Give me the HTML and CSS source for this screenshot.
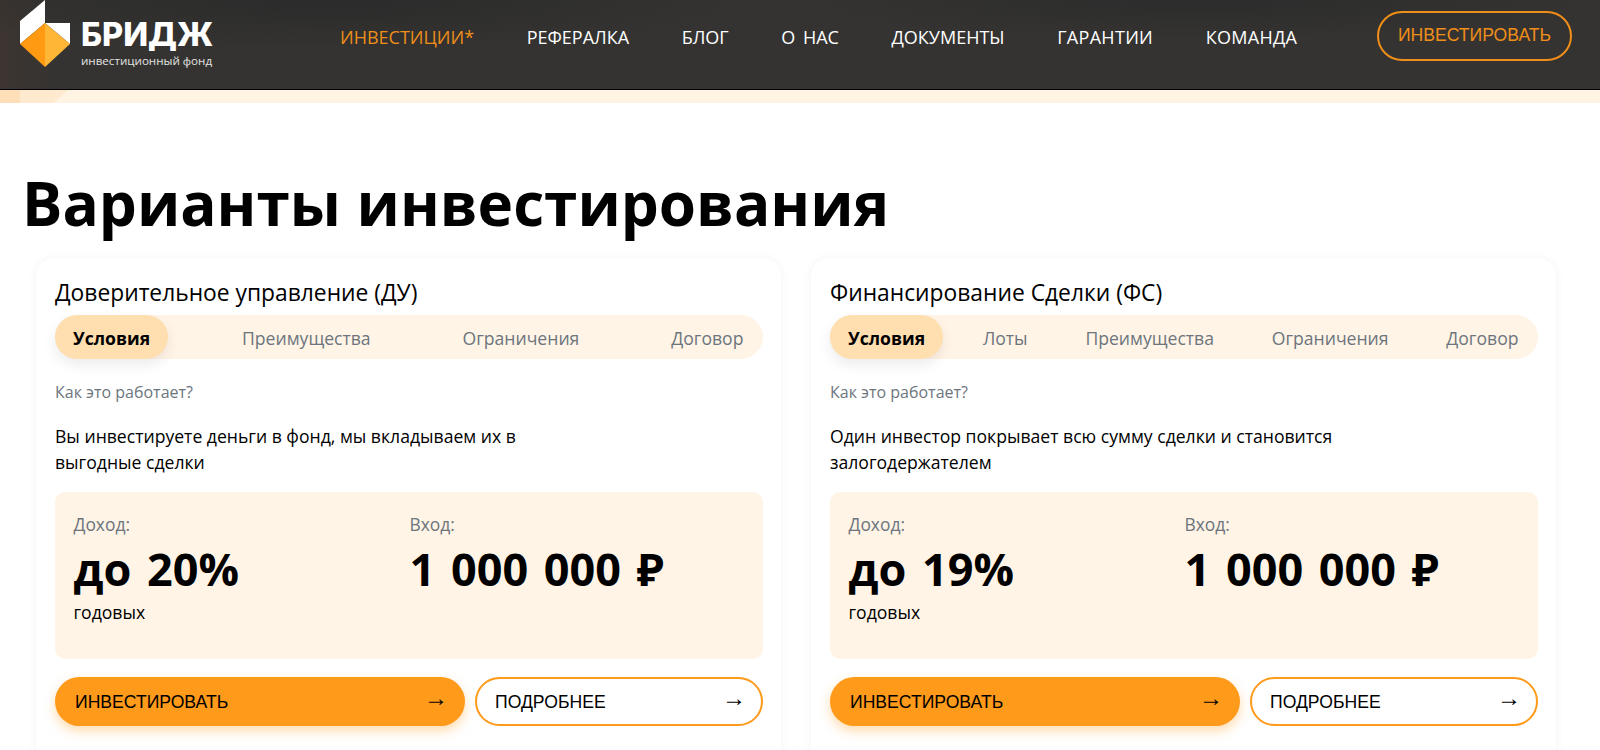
FILE: index.html
```html
<!DOCTYPE html>
<html lang="ru">
<head>
<meta charset="utf-8">
<title>Бридж</title>
<link rel="stylesheet" href="styles.css">
</head>
<body>
<header class="header">
  <a class="logo">
    <svg class="logo-mark" width="52" height="68" viewBox="0 0 52 68">
      <polygon points="0,21 25,0 25,23 0,44" fill="#fff"/>
      <polygon points="25,23 50,23 50,44" fill="#fff"/>
      <polygon points="25,23 0,44 25,67" fill="#ff9a12"/>
      <polygon points="25,23 50,44 25,67" fill="#ffb535"/>
    </svg>
    <span class="logo-text">
      <span class="logo-name">БРИДЖ</span>
      <span class="logo-sub">инвестиционный фонд</span>
    </span>
  </a>
  <nav class="nav">
    <a class="nav-link nav-active">ИНВЕСТИЦИИ*</a>
    <a class="nav-link">РЕФЕРАЛКА</a>
    <a class="nav-link">БЛОГ</a>
    <a class="nav-link">О НАС</a>
    <a class="nav-link">ДОКУМЕНТЫ</a>
    <a class="nav-link nav-wide">ГАРАНТИИ</a>
    <a class="nav-link nav-wide">КОМАНДА</a>
  </nav>
  <a class="header-btn">ИНВЕСТИРОВАТЬ</a>
</header>
<div class="strip"><span class="strip-a"></span><span class="strip-b"></span></div>
<main class="main">
  <h1 class="title">Варианты инвестирования</h1>
  <div class="cards">
    <section class="card">
      <h2 class="card-title">Доверительное управление (ДУ)</h2>
      <div class="tabs">
        <span class="tab tab-active">Условия</span>
        <span class="tab">Преимущества</span>
        <span class="tab">Ограничения</span>
        <span class="tab">Договор</span>
      </div>
      <p class="muted">Как это работает?</p>
      <p class="desc">Вы инвестируете деньги в фонд, мы вкладываем их в<br>выгодные сделки</p>
      <div class="stats">
        <div class="stat">
          <div class="stat-label">Доход:</div>
          <div class="stat-value">до 20%</div>
          <div class="stat-note">годовых</div>
        </div>
        <div class="stat">
          <div class="stat-label">Вход:</div>
          <div class="stat-value">1 000 000 ₽</div>
        </div>
      </div>
      <div class="actions">
        <a class="btn btn-primary">ИНВЕСТИРОВАТЬ<span class="arrow">→</span></a>
        <a class="btn btn-outline">ПОДРОБНЕЕ<span class="arrow">→</span></a>
      </div>
    </section>
    <section class="card">
      <h2 class="card-title">Финансирование Сделки (ФС)</h2>
      <div class="tabs">
        <span class="tab tab-active">Условия</span>
        <span class="tab">Лоты</span>
        <span class="tab">Преимущества</span>
        <span class="tab">Ограничения</span>
        <span class="tab">Договор</span>
      </div>
      <p class="muted">Как это работает?</p>
      <p class="desc">Один инвестор покрывает всю сумму сделки и становится<br>залогодержателем</p>
      <div class="stats">
        <div class="stat">
          <div class="stat-label">Доход:</div>
          <div class="stat-value">до 19%</div>
          <div class="stat-note">годовых</div>
        </div>
        <div class="stat">
          <div class="stat-label">Вход:</div>
          <div class="stat-value">1 000 000 ₽</div>
        </div>
      </div>
      <div class="actions">
        <a class="btn btn-primary">ИНВЕСТИРОВАТЬ<span class="arrow">→</span></a>
        <a class="btn btn-outline">ПОДРОБНЕЕ<span class="arrow">→</span></a>
      </div>
    </section>
  </div>
</main>
</body>
</html>
```
FILE: styles.css
```css
* { box-sizing: border-box; }
html, body { margin: 0; height: 750px; overflow: hidden; background: #fff; }
body { font-family: "Open Sans", "Noto Sans", sans-serif; color: #000; }

.header {
  height: 90px;
  display: flex;
  align-items: flex-start;
  padding-left: 20px;
  background: #343331;
  background-image: radial-gradient(ellipse 420px 50px at 330px 0, #2b2b2b, rgba(43,43,43,0)), radial-gradient(ellipse 400px 40px at 1200px 0, #2c2c2c, rgba(44,44,44,0)), linear-gradient(90deg, #3d3530, #343331 60px);
  border-bottom: 1px solid #000;
}
.logo { display: flex; align-items: flex-start; width: 320px; flex: none; }
.logo-mark { display: block; flex: none; }
.logo-text { display: flex; flex-direction: column; margin-left: 9px; padding-top: 17px; color: #fff; }
.logo-name { font: 800 32.5px/36px "Inter", "Open Sans", sans-serif; }
.logo-sub { font: 400 11.6px/13px "Open Sans", sans-serif; color: #e3e3e3; margin-top: 1px; white-space: nowrap; }

.nav { display: flex; gap: 52.6px; padding-top: 24px; width: 1048px; flex: none; word-spacing: 3px; }
.nav-link { font-size: 18px; line-height: 26px; color: #fff; white-space: nowrap; }
.nav-active { color: #ef8e19; }
.nav-wide { letter-spacing: .3px; }
.header-btn {
  width: 195px; height: 50px; margin-top: 11px; margin-left: -11px;
  display: flex; align-items: center; justify-content: center;
  border: 2px solid #ef8e19; border-radius: 25px;
  font: 400 17.6px/22px "Liberation Sans", Arial, sans-serif; color: #ef8e19;
  padding-bottom: 3px;
}

.strip { height: 13px; background: #fff3e3; display: flex; }
.strip-a { width: 20px; background: #ffdfb8; }
.strip-b { width: 48px; background: #ffe9cf; clip-path: polygon(0 0, 100% 0, 70% 100%, 0 100%); }

.main { padding: 58px 44px 0 36px; }
.title { margin: 0 0 0 -14px; font-size: 60.2px; line-height: 85px; font-weight: 700; white-space: nowrap; }
.cards { display: flex; gap: 30px; margin-top: 12px; }
.card {
  width: 745px; flex: none; height: 520px;
  padding: 20px 18px 0 19px;
  background: #fff; border-radius: 18px;
  box-shadow: 0 0 10px rgba(0,0,0,.05);
}
.card-title { margin: 0; font-size: 22.8px; line-height: 30px; font-weight: 500; height: 37px; white-space: nowrap; }
.tabs { display: flex; justify-content: space-between; height: 44px; padding-right: 1.5px; background: #fff4e6; border-radius: 22px; }
.tab { display: flex; align-items: center; padding: 2px 18px 0; font-size: 17.6px; color: #6c757d; white-space: nowrap; }
.tab-active { background: #ffdfb0; border-radius: 22px; color: #000; font-weight: 700; box-shadow: 0 6px 14px rgba(0,0,0,.08); }
.muted { margin: 0; padding-top: 21px; font-size: 16px; line-height: 24px; color: #6c757d; height: 58px; }
.desc { margin: 6px 0 0; font-size: 17.6px; line-height: 26px; height: 69px; white-space: nowrap; }
.stats { display: grid; grid-template-columns: 336px 1fr; height: 167px; padding: 19px 18.5px; background: #fff4e6; border-radius: 10px; }
.stat-label { font-size: 17.4px; line-height: 26px; color: #6c757d; }
.stat-value { font-size: 45px; line-height: 58px; font-weight: 700; margin-top: 3px; white-space: nowrap; word-spacing: 4px; }
.stat-note { font-size: 17.6px; line-height: 24px; margin-top: 2px; }
.actions { display: flex; gap: 10px; margin-top: 18px; }
.btn {
  height: 49px; display: flex; align-items: center; justify-content: space-between;
  border-radius: 25px; padding: 0 20px;
  font: 400 17.6px/22px "Liberation Sans", Arial, sans-serif; color: #000; white-space: nowrap;
}
.btn-primary { width: 410px; background: #ff9a1a; box-shadow: 0 5px 12px rgba(255,154,26,.35); }
.btn-outline { width: 288px; background: #fff; border: 2px solid #ff9a1a; padding: 0 18px; }
.arrow { font-family: "Liberation Sans", sans-serif; font-size: 24px; margin: -8px -3px 0 0; }
```
